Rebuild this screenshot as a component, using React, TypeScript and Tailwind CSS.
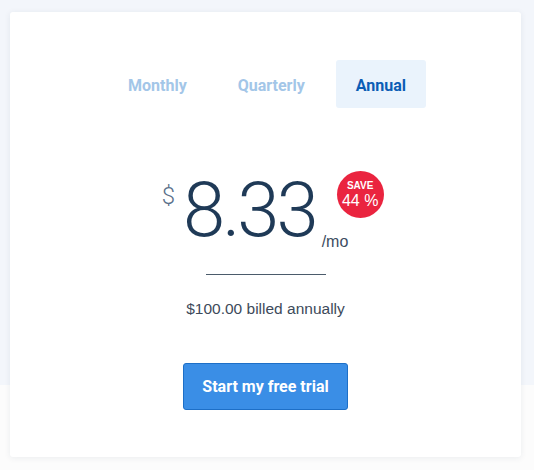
import React from 'react';

const tabs = [
  { id: 'monthly', label: 'Monthly', active: false },
  { id: 'quarterly', label: 'Quarterly', active: false },
  { id: 'annual', label: 'Annual', active: true },
];

function PlanTabs() {
  return (
    <div className="flex justify-center gap-[11px] pl-[3px]">
      {tabs.map((tab) => (
        <button
          key={tab.id}
          className={
            tab.active
              ? 'h-[48px] px-[20px] pt-[3px] rounded-[3px] bg-[#eaf3fc] text-[#0b5db5] text-[16px] font-bold'
              : 'h-[48px] px-[20px] pt-[3px] rounded-[3px] text-[#a3c6e8] text-[16px] font-bold'
          }
        >
          {tab.label}
        </button>
      ))}
    </div>
  );
}

function Price() {
  return (
    <div className="flex justify-center">
      <div className="relative flex items-start pr-[21px] text-[#1f3a57]">
        <span className="mt-[12px] mr-[8px] text-[24px] leading-none font-light text-[#5a6f8a]">$</span>
        <span className="text-[76px] leading-none font-light tracking-[-3px]">8.33</span>
        <span className="self-end mb-[-2px] ml-[6px] text-[16px] leading-none text-[#3d4d5f] font-['Liberation_Sans',sans-serif]">
          /mo
        </span>
        <div className="absolute left-[175px] top-[-1px] w-[47px] h-[47px] rounded-full bg-[#ea243f] flex flex-col items-center justify-center text-white font-['Liberation_Sans',sans-serif]">
          <span className="text-[10px] font-bold leading-none">SAVE</span>
          <span className="text-[16px] leading-none mt-[2px]">44 %</span>
        </div>
      </div>
    </div>
  );
}

export default function App() {
  return (
    <div className="w-[534px] h-[470px] overflow-hidden bg-[linear-gradient(to_bottom,#f3f6fb_385px,#fcfcfc_385px)] pt-[12px] pl-[10px] font-['Roboto',sans-serif]">
      <div className="w-[511px] h-[445px] bg-white rounded-[3px] shadow-[0_1px_6px_rgba(30,50,80,0.08)] pt-[48px]">
        <PlanTabs />
        <div className="mt-[64px]">
          <Price />
        </div>
        <div className="mt-[26px] flex justify-center">
          <div className="w-[120px] h-px bg-[#4b5b6b]" />
        </div>
        <p className="mt-[22px] text-center text-[15.5px] text-[#3d4a5a] font-['Liberation_Sans',sans-serif]">
          $100.00 billed annually
        </p>
        <div className="mt-[43px] flex justify-center">
          <button className="h-[47px] px-[18px] rounded-[3px] bg-[#3a8ee6] border border-[#1d6fc7] text-white text-[16px] font-bold">
            Start my free trial
          </button>
        </div>
      </div>
    </div>
  );
}
